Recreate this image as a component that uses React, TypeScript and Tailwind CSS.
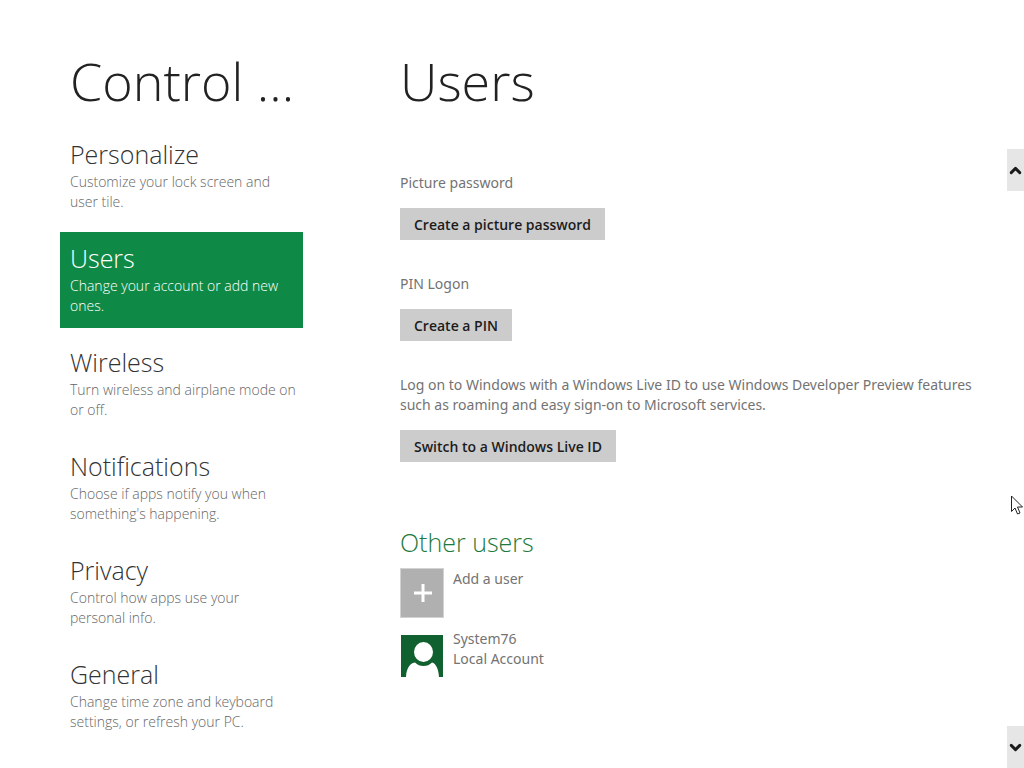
// Icons
import { ChevronDown, ChevronUp } from "lucide-react";

const categories = [
  { title: "Personalize", text: "Customize your lock screen and user tile." },
  { title: "Users", text: "Change your account or add new ones." },
  { title: "Wireless", text: "Turn wireless and airplane mode on or off." },
  {
    title: "Notifications",
    text: "Choose if apps notify you when something's happening.",
  },
  { title: "Privacy", text: "Control how apps use your personal info." },
  {
    title: "General",
    text: "Change time zone and keyboard settings, or refresh your PC.",
  },
];

const options = [
  { label: "Picture password", action: "Create a picture password" },
  { label: "PIN Logon", action: "Create a PIN" },
  {
    label:
      "Log on to Windows with a Windows Live ID to use Windows Developer Preview features such as roaming and easy sign-on to Microsoft services.",
    action: "Switch to a Windows Live ID",
  },
];

const Sidebar = ({ active }: { active: string }) => (
  <nav className="w-[243px] shrink-0">
    <h1 className="px-2.5 text-[52px] leading-[66px] font-light text-[#222222] whitespace-nowrap">
      Control ...
    </h1>

    <ul className="mt-3.5 flex flex-col gap-2">
      {categories.map(({ title, text }) => {
        const isActive = title === active;

        return (
          <li key={title}>
            <a
              href="#"
              aria-current={isActive ? "page" : undefined}
              className={`block py-3 pl-2.5 pr-1.5 ${
                isActive ? "bg-[#0f8a46] text-white" : "text-[#666666]"
              }`}
            >
              <span
                className={`block mb-1 text-[25px] leading-7 font-light ${
                  isActive ? "text-white" : "text-[#333333]"
                }`}
              >
                {title}
              </span>
              <span className="block text-sm leading-5 font-light">{text}</span>
            </a>
          </li>
        );
      })}
    </ul>
  </nav>
);

const Users = () => (
  <main className="flex-1 ml-[97px] pr-4">
    <h2 className="text-[52px] leading-[66px] font-light text-[#222222]">
      Users
    </h2>

    <div className="mt-[59px] flex flex-col gap-[34px]">
      {options.map(({ label, action }) => (
        <section key={action}>
          <p className="mb-[15px] font-['Noto_Sans',sans-serif] text-sm leading-5">
            {label}
          </p>
          <button
            type="button"
            className="block h-8 px-3.5 pt-0.5 bg-[#cccccc] text-sm font-semibold text-[#1c1c1c]"
          >
            {action}
          </button>
        </section>
      ))}
    </div>

    <h3 className="mt-[66px] mb-3 text-[25px] leading-7 font-light text-[#1d7a3c]">
      Other users
    </h3>

    <div className="flex flex-col gap-2.5 font-['Noto_Sans',sans-serif] text-sm leading-5">
      <button type="button" className="flex items-start gap-[9px] text-left">
        <span className="flex h-[50px] w-11 items-center justify-center border border-[#d2d2d2] bg-[#b0b0b0]">
          <svg className="h-5 w-5" viewBox="0 0 20 20" aria-hidden="true">
            <path d="M11 1v18M2 10h18" stroke="#fff" strokeWidth="3" />
          </svg>
        </span>
        <span className="pt-px">Add a user</span>
      </button>

      <div className="flex items-start gap-2.5">
        <svg
          className="mt-[7px] ml-px h-[42px] w-[42px]"
          viewBox="0 0 42 42"
          aria-hidden="true"
        >
          <path d="M0 0h42v42H0z" fill="#11602f" />
          <ellipse cx="22.500" cy="17" rx="9.500" ry="10" fill="#fff" />
          <path
            d="M5 42C5.500 34 8 28.500 14 27.500c2.500 2.500 5 3.500 8.500 3.500s6-1 8.500-3.500c4 1 6.500 6.500 7 14.500z"
            fill="#fff"
          />
        </svg>
        <p className="pt-px">
          System76
          <br />
          Local Account
        </p>
      </div>
    </div>
  </main>
);

const Scrollbar = () => (
  <div className="flex w-[17px] shrink-0 flex-col justify-between pt-[101px] text-[#1a1a1a]">
    <button
      type="button"
      aria-label="Scroll up"
      className="flex h-[42px] items-center justify-center bg-[#e6e6e6]"
    >
      <ChevronUp className="h-[17px] w-[17px]" strokeWidth={4} />
    </button>
    <button
      type="button"
      aria-label="Scroll down"
      className="flex h-[42px] items-center justify-center bg-[#e6e6e6]"
    >
      <ChevronDown className="h-[17px] w-[17px]" strokeWidth={4} />
    </button>
  </div>
);

const App = () => (
  <div className="relative flex min-h-screen pt-12 pl-[60px] bg-white font-['Open_Sans',sans-serif] text-[#737373]">
    <Sidebar active="Users" />
    <Users />
    <Scrollbar />

    {/* Mouse pointer */}
    <svg
      className="absolute top-[495px] right-px h-5 w-3"
      viewBox="0 0 12 20"
      aria-hidden="true"
    >
      <path
        d="M.5 1v15.500l3.500-3.500 2.500 6 2.500-1-2.500-6h5z"
        fill="#fff"
        stroke="#222"
      />
    </svg>
  </div>
);

export default App;
